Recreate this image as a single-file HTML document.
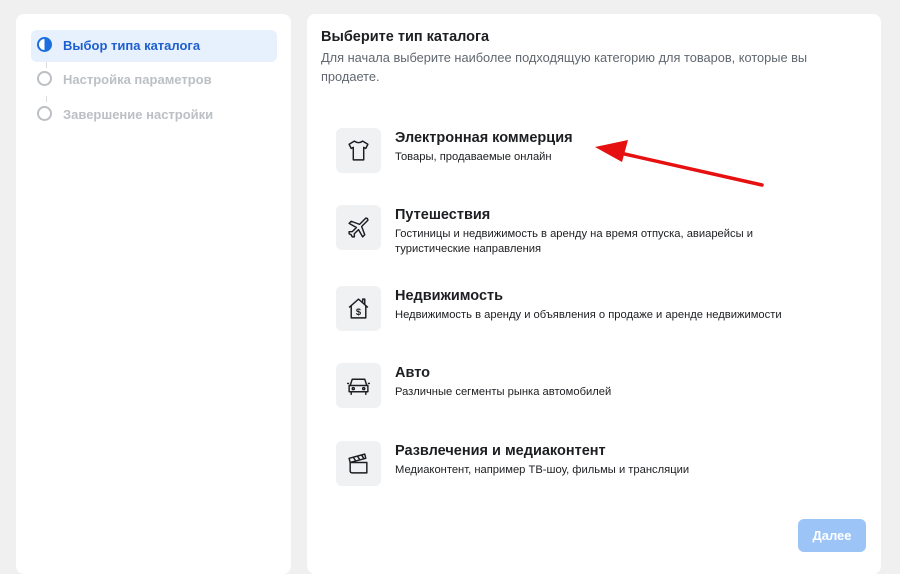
<!DOCTYPE html>
<html><head><meta charset="utf-8"><style>
body{margin:0;width:900px;height:557px;background:#f0f0f0;font-family:"Liberation Sans",Arial,sans-serif;position:relative;overflow:hidden}
.p{position:absolute;background:#fff;border-radius:8px}
.step{position:absolute;left:31px;width:246px;height:32px;font-size:13px;font-weight:bold;color:#bcc0c4;line-height:32px}
.step .c{position:absolute;left:6px;top:7px;width:15px;height:15px;border:2px solid #bcc0c4;border-radius:50%;box-sizing:border-box}
.step span{position:absolute;left:32px}
.row{position:absolute;left:336px}
.ic{position:absolute;left:0;top:0;width:45px;height:45px;background:#f0f1f2;border-radius:6px}
.ic svg{position:absolute;left:10px;top:10px}
.t{position:absolute;left:59px;top:2px;font-size:14.5px;font-weight:bold;color:#1c1e21;white-space:nowrap}
.d{position:absolute;left:59px;top:22px;font-size:11.2px;color:#1c1e21;width:400px;line-height:15px}
</style></head><body>
<div class="p" style="left:16px;top:14px;width:275px;height:560px"></div>
<div class="p" style="left:307px;top:14px;width:574px;height:560px"></div>
<div class="step" style="top:30px;background:#e7f0fd;border-radius:6px;color:#1d5fcf"><div class="c" style="border-color:#1d6fe0;background:linear-gradient(90deg,#fff 50%,#1d6fe0 50%)"></div><span>Выбор типа каталога</span></div>
<div style="position:absolute;left:46px;top:62px;width:1px;height:6px;background:#ddd"></div>
<div class="step" style="top:64px"><div class="c"></div><span>Настройка параметров</span></div>
<div style="position:absolute;left:46px;top:96px;width:1px;height:6px;background:#ddd"></div>
<div class="step" style="top:99px"><div class="c"></div><span>Завершение настройки</span></div>

<div style="position:absolute;left:321px;top:29px;font-size:14.5px;font-weight:bold;color:#1c1e21">Выберите тип каталога</div>
<div style="position:absolute;left:321px;top:48px;font-size:12.8px;color:#606770;width:520px;line-height:19px">Для начала выберите наиболее подходящую категорию для товаров, которые вы продаете.</div>

<div class="row" style="top:128px"><div class="ic"><svg width="25" height="25" viewBox="0 0 24 24" fill="none" stroke="#1c1e21" stroke-width="1.4" stroke-linejoin="round"><path d="M8 3 L3 6 L5 10 L7 9 L7 21 L17 21 L17 9 L19 10 L21 6 L16 3 Q12 6 8 3Z"/></svg></div><div class="t">Электронная коммерция</div><div class="d">Товары, продаваемые онлайн</div></div>
<div class="row" style="top:205px"><div class="ic"><svg width="25" height="25" viewBox="0 0 24 24" fill="none" stroke="#1c1e21" stroke-width="1.4" stroke-linejoin="round"><path d="M19 3 Q21 3 21 5 L15 11 L18 19 L16 21 L12 14 L8 18 L8 21 L6 21 L5 19 L3 18 L3 16 L6 16 L10 12 L3 8 L5 6 L13 9 Z"/></svg></div><div class="t">Путешествия</div><div class="d" style="width:385px">Гостиницы и недвижимость в аренду на время отпуска, авиарейсы и туристические направления</div></div>
<div class="row" style="top:286px"><div class="ic"><svg width="25" height="25" viewBox="0 0 24 24" fill="none" stroke="#1c1e21" stroke-width="1.4" stroke-linejoin="round"><path d="M3 11 L12 3 L21 11 M5 9 L5 21 L19 21 L19 9 M16 6 L16 3 L18 3 L18 8"/><text x="12" y="18" font-size="9" font-family="Liberation Sans" text-anchor="middle" fill="#1c1e21" stroke="none" font-weight="bold">$</text></svg></div><div class="t">Недвижимость</div><div class="d">Недвижимость в аренду и объявления о продаже и аренде недвижимости</div></div>
<div class="row" style="top:363px"><div class="ic"><svg width="25" height="25" viewBox="0 0 24 24" fill="none" stroke="#1c1e21" stroke-width="1.4" stroke-linejoin="round"><path d="M6 6 L18 6 L20 12 L4 12 Z M3 12 L21 12 L21 18 L3 18 Z M5 18 L5 21 M19 18 L19 21 M3 10 L1 10 M21 10 L23 10"/><circle cx="7" cy="15" r="1"/><circle cx="17" cy="15" r="1"/></svg></div><div class="t">Авто</div><div class="d">Различные сегменты рынка автомобилей</div></div>
<div class="row" style="top:441px"><div class="ic"><svg width="25" height="25" viewBox="0 0 24 24" fill="none" stroke="#1c1e21" stroke-width="1.4" stroke-linejoin="round"><path d="M4 11 L20 11 L20 21 L6 21 Q4 21 4 19 Z M4 11 L3 7 L18 3 L19 7 Z M7 6 L9 9 M11 5 L13 8 M15 4 L17 7"/></svg></div><div class="t">Развлечения и медиаконтент</div><div class="d">Медиаконтент, например ТВ-шоу, фильмы и трансляции</div></div>

<div style="position:absolute;left:798px;top:519px;width:68px;height:33px;background:#9dc4f7;border-radius:6px;color:#fff;font-size:13px;font-weight:bold;text-align:center;line-height:33px">Далее</div>

<svg style="position:absolute;left:0;top:0" width="900" height="557"><path d="M762 185 L620 153" stroke="#e61010" stroke-width="3.5" stroke-linecap="round"/><path d="M595 147 L628 140 L622 162 Z" fill="#e61010"/></svg>
</body></html>
